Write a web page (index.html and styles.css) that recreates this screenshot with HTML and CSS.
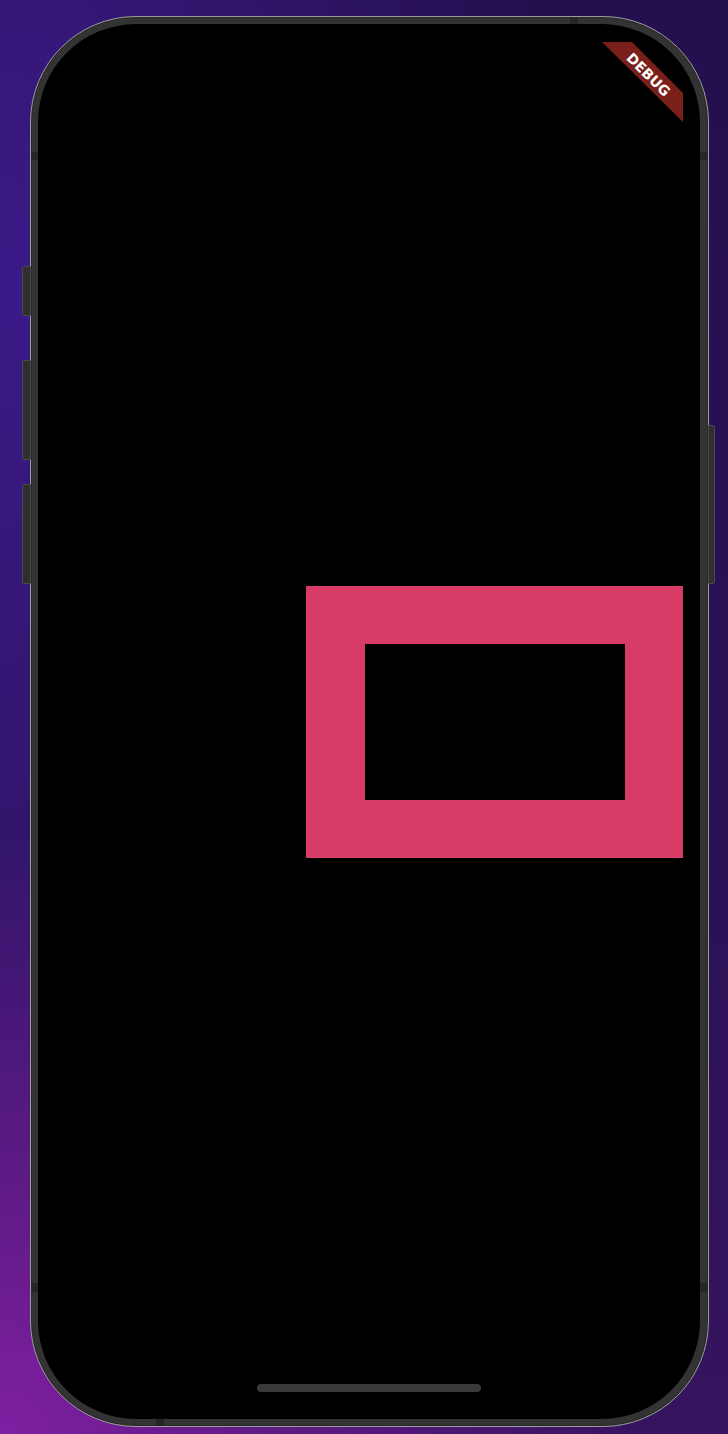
FILE: index.html
```html
<!DOCTYPE html>
<html>
<head>
<meta charset="utf-8">
<link rel="stylesheet" href="styles.css">
</head>
<body>
<div class="stage">
  <div class="phone">
    <div class="btn btn-action"></div>
    <div class="btn btn-volup"></div>
    <div class="btn btn-voldown"></div>
    <div class="btn btn-power"></div>
    <div class="mark mark-lt"></div>
    <div class="mark mark-rt"></div>
    <div class="mark mark-top"></div>
    <div class="mark mark-lb"></div>
    <div class="mark mark-rb"></div>
    <div class="mark mark-bottom"></div>
    <div class="screen">
      <div class="island">
        <div class="island-pill"></div>
        <div class="island-cam"></div>
      </div>
      <div class="frame-box"></div>
      <svg class="debug" width="81" height="81" viewBox="0 0 81 81">
        <polygon points="0,0 30,0 81,51 81,80" fill="#7b1f1b"/>
        <text x="0" y="0" transform="translate(46.5 32.5) rotate(45)" text-anchor="middle" dominant-baseline="central" class="debug-text">DEBUG</text>
      </svg>
      <div class="home-indicator"></div>
    </div>
  </div>
</div>
</body>
</html>
```
FILE: styles.css
```css
html, body {
  margin: 0;
  padding: 0;
}
body {
  width: 728px;
  height: 1434px;
  overflow: hidden;
  font-family: "Liberation Sans", Arial, sans-serif;
  background:
    radial-gradient(ellipse 640px 600px at 0% 100%, rgba(130, 32, 165, 0.95), rgba(130, 32, 165, 0) 100%),
    radial-gradient(ellipse 560px 1000px at 0% 20%, rgba(62, 28, 145, 0.85), rgba(62, 28, 145, 0) 100%),
    linear-gradient(to bottom, #24104e, #2a1156 60%, #36145e);
}
.stage {
  padding: 16px 0 0 30px;
}
.phone {
  position: relative;
  width: 679px;
  height: 1411px;
  box-sizing: border-box;
  border-radius: 106px;
  background: #333333;
  border: 1px solid #9c9c9c;
  padding: 7px 8px 7px 7px;
  box-shadow: inset 0 0 0 1px #2a2a2a;
}
.btn {
  position: absolute;
  background: #2f2f2f;
  border: 1px solid #4a4a4a;
  box-sizing: border-box;
}
.btn-action { left: -9px; top: 249px; width: 9px; height: 50px; border-radius: 2px 0 0 2px; }
.btn-volup { left: -9px; top: 343px; width: 9px; height: 100px; border-radius: 2px 0 0 2px; }
.btn-voldown { left: -9px; top: 467px; width: 9px; height: 100px; border-radius: 2px 0 0 2px; }
.btn-power { right: -7px; top: 408px; width: 7px; height: 159px; border-radius: 0 2px 2px 0; }
.mark {
  position: absolute;
  background: #262626;
}
.mark-lt { left: 0; top: 135px; width: 7px; height: 8px; }
.mark-rt { right: 0; top: 135px; width: 8px; height: 8px; }
.mark-lb { left: 0; top: 1266px; width: 7px; height: 9px; }
.mark-rb { right: 0; top: 1266px; width: 8px; height: 9px; }
.mark-top { left: 539px; top: 0; width: 8px; height: 7px; }
.mark-bottom { left: 125px; bottom: 0; width: 8px; height: 7px; }
.screen {
  position: relative;
  width: 662px;
  height: 1395px;
  background: #000000;
  border-radius: 98px;
  overflow: hidden;
  display: flex;
  align-items: center;
  justify-content: flex-end;
  padding-right: 17px;
  box-sizing: border-box;
}
.island {
  position: absolute;
  top: 39px;
  left: 249px;
  display: flex;
  gap: 20px;
  align-items: center;
}
.island-pill {
  width: 101px;
  height: 44px;
  border-radius: 22px;
  border: 1px solid #040404;
}
.island-cam {
  width: 48px;
  height: 44px;
  border-radius: 24px;
  border: 1px solid #040404;
}
.frame-box {
  width: 377px;
  height: 272px;
  box-sizing: border-box;
  border: 58px solid #d83b66;
  border-left-width: 59px;
  background: #000000;
}
.debug {
  position: absolute;
  top: 18px;
  right: 17px;
}
.debug-text {
  fill: #ffffff;
  font-family: "DejaVu Sans", "Liberation Sans", sans-serif;
  font-weight: 700;
  font-size: 14px;
}
.home-indicator {
  position: absolute;
  bottom: 27px;
  left: 50%;
  transform: translateX(-50%);
  width: 224px;
  height: 8px;
  border-radius: 4px;
  background: #3a3a3a;
}
```
